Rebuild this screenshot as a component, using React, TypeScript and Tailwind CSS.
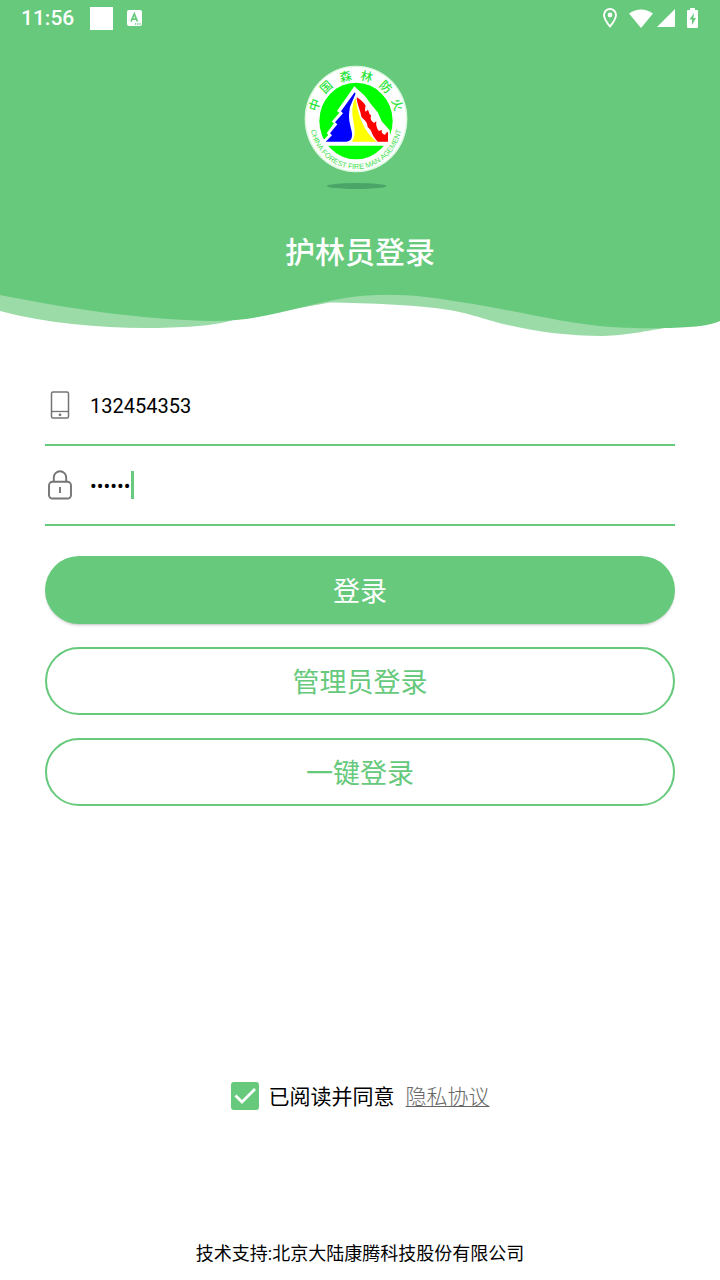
import { useState } from 'react'

const sealText = [
  { char: '中', angle: -71 },
  { char: '国', angle: -43 },
  { char: '森', angle: -14 },
  { char: '林', angle: 14 },
  { char: '防', angle: 43 },
  { char: '火', angle: 71 },
]

const StatusBar = () => (
  <div className="flex h-9 items-center pr-[22px] pl-[21px] text-white">
    <span className="text-[21px] leading-none font-medium">11:56</span>
    <div className="ml-4 size-[23px] bg-white" />
    <svg className="ml-[14px] h-4 w-[15px]" viewBox="0 0 15 16">
      <rect width="15" height="16" rx="2" fill="#fff" />
      <path d="M4 11.500 7.300 4l3.200 7.500M5.200 9.200h4.200" fill="none" stroke="#66c97c" strokeWidth="1.800" />
      <path d="M8 14h1.200M10.300 14h1.200M12.500 14h1.200" stroke="#66c97c" strokeWidth="1.300" />
    </svg>
    <div className="ml-auto flex items-center">
      <svg className="h-5 w-[14px]" viewBox="0 0 14 20">
        <path
          d="M7 1a6 6 0 0 0-6 6c0 4.200 6 11.500 6 11.500S13 11.200 13 7a6 6 0 0 0-6-6Z"
          fill="none"
          stroke="#fff"
          strokeWidth="1.900"
        />
        <circle cx="7" cy="7" r="2.400" fill="#fff" />
      </svg>
      <svg className="ml-3 h-[19px] w-6" viewBox="0 0 24 19">
        <path d="M0 4.500Q12-3.500 24 4.500L12 19Z" fill="#fff" />
      </svg>
      <svg className="ml-1 size-[18px]" viewBox="0 0 18 18">
        <path d="M18 0v18H0Z" fill="#fff" />
      </svg>
      <svg className="ml-3 h-5 w-[11px]" viewBox="0 0 11 20">
        <path d="M3 0h5v2h2a1 1 0 0 1 1 1v16a1 1 0 0 1-1 1H1a1 1 0 0 1-1-1V3a1 1 0 0 1 1-1h2Z" fill="#fff" />
        <path d="M7 5 2.500 11.500H5V17l4-7H6.500Z" fill="#66c97c" />
      </svg>
    </div>
  </div>
)

const Logo = () => (
  <svg className="h-[145px] w-[125px]" viewBox="0 0 375 435" role="img" aria-label="中国森林防火">
    <ellipse cx="183" cy="192" rx="154" ry="160" fill="#fff" />
    <ellipse cx="183" cy="192" rx="152" ry="158" fill="none" stroke="#b9f5c0" strokeWidth="2" />
    <ellipse cx="183" cy="198" rx="110" ry="115" fill="#0f0" />
    <path
      d="M178 94 126 168l7 5-23 27 7 5-22 30 5 4-24 27v6h212l-4-46-24-27-12-27-20-24-18-25Z"
      fill="#fff"
    />
    <path
      d="m178 113-40 56 6 6-24 27 7 6-22 27 6 6-19 19h60c17 0 22-13 18-31-5-25-12-37-5-73l16-38c1-4-1-7-3-5Z"
      fill="#00f"
    />
    <path d="M182 129c-9 14-12 34-9 56 4 28 13 56-3 75h75c-30-22-56-67-63-131Z" fill="#ff0" />
    <path
      d="M185 127c12 7 20 14 27 25-2 8-3 13 0 18l7-6c4 9 3 13 9 17-3 10 0 19 9 23l7-5c-2 12 2 23 8 29l9-4c-3 8 2 14 10 15 1-5 4-8 8-8v29h-31c-23-25-13-30-30-44-2-19-10-20-19-31-2-17-14-38-14-58Z"
      fill="#f00"
    />
    <path d="M78 266h212" stroke="#fff" strokeWidth="7" />
    {sealText.map(({ char, angle }) => (
      <text
        key={char}
        x="183"
        y="74"
        textAnchor="middle"
        transform={`rotate(${angle} 183 192)`}
        className="fill-[#2be53a] font-['Noto_Sans_CJK_SC',sans-serif] text-[36px] font-medium"
      >
        {char}
      </text>
    ))}
    <path id="seal-arc" d="M45 212A139 148 0 0 0 321 212" fill="none" />
    <text className="fill-[#3fdf50] font-['Liberation_Sans',sans-serif] text-[22px]" textAnchor="middle">
      <textPath href="#seal-arc" startOffset="50%">
        CHINA FOREST FIRE MAN AGEMENT
      </textPath>
    </text>
    <ellipse cx="185" cy="393" rx="89" ry="9" fill="#4ba468" />
  </svg>
)

const Wave = () => (
  <svg className="block h-[60px] w-full" viewBox="0 0 720 60" preserveAspectRatio="none">
    <path
      d="M0 0V31C45 43 100 48 145 48C180 48 215 46 233 40L330 22.500C365 23 425 25 455 31C470 34 478 37 492 41C528 51 565 56 602 56C630 55 645 51 665 48L720 40V0Z"
      fill="#9bdba8"
    />
    <path
      d="M0 0V15C60 27 140 40 215 41C265 41 305 24 345 18C385 12 420 15 460 22C520 31 560 43 610 47C640 49 655 48 670 48C700 47 710 45 720 41V0Z"
      fill="#66c97c"
    />
  </svg>
)

const PhoneIcon = () => (
  <svg className="size-[30px] shrink-0" viewBox="0 0 30 30" fill="none" stroke="#757575">
    <rect x="6.500" y="2" width="17" height="26" rx="1.500" strokeWidth="1.500" />
    <path d="M6.500 21.500h17" strokeWidth="1.300" />
    <circle cx="15" cy="24.800" r="1.400" fill="#757575" stroke="none" />
  </svg>
)

const LockIcon = () => (
  <svg className="size-[30px] shrink-0" viewBox="0 0 30 30" fill="none" stroke="#757575" strokeWidth="1.900">
    <rect x="4" y="11.800" width="22" height="16.700" rx="3.500" />
    <path d="M8.800 11.500V7.500a6.200 6.200 0 0 1 12.400 0v4M15 17v6" />
  </svg>
)

const App = () => {
  const [phone, setPhone] = useState('132454353')
  const [password, setPassword] = useState('123456')
  const [agreed, setAgreed] = useState(true)

  return (
    <div className="flex min-h-screen flex-col bg-white font-['Roboto','Noto_Sans_CJK_SC',sans-serif] text-black">
      <header>
        <div className="h-[280px] bg-[#66c97c]">
          <StatusBar />
          <div className="mt-[19px] mr-[5px] flex justify-center">
            <Logo />
          </div>
          <h1 className="mt-[31px] text-center text-[30px] leading-[44px] font-medium text-white">护林员登录</h1>
        </div>
        <Wave />
      </header>
      <form className="mt-[26px] flex flex-col px-[45px]" onSubmit={(e) => e.preventDefault()}>
        <label className="flex h-20 items-center border-b-2 border-[#66c97c]">
          <PhoneIcon />
          <input
            type="tel"
            aria-label="手机号"
            value={phone}
            onChange={(e) => setPhone(e.target.value)}
            className="ml-[15px] h-10 w-full pt-0.5 text-[20px] outline-none"
          />
        </label>
        <label className="flex h-20 items-center border-b-2 border-[#66c97c]">
          <LockIcon />
          <input
            type="password"
            aria-label="密码"
            value={password}
            onChange={(e) => setPassword(e.target.value)}
            className="ml-[15px] field-sizing-content h-10 pt-0.5 text-[20px] caret-transparent outline-none"
          />
          <span className="h-7 w-[3px] bg-[#66c97c]" />
        </label>
        <div className="mt-[30px] flex flex-col gap-[23px] text-[27px]">
          <button
            type="submit"
            className="h-[68px] rounded-full bg-[#66c97c] pt-1 text-white shadow-[0_2px_3px_-1px_rgba(0,0,0,.25)]"
          >
            登录
          </button>
          <button type="button" className="h-[68px] rounded-full border-2 border-[#66c97c] pt-1 text-[#66c97c]">
            管理员登录
          </button>
          <button type="button" className="h-[68px] rounded-full border-2 border-[#66c97c] pt-1 text-[#66c97c]">
            一键登录
          </button>
        </div>
      </form>
      <div className="mt-auto flex items-center justify-center text-[21px] leading-8">
        <label className="flex items-center gap-[10px]">
          <span className="relative size-7">
            <input
              type="checkbox"
              checked={agreed}
              onChange={(e) => setAgreed(e.target.checked)}
              className="peer block size-7 appearance-none rounded-[3px] border-2 border-[#66c97c] checked:bg-[#66c97c]"
            />
            <svg className="pointer-events-none absolute inset-0 hidden peer-checked:block" viewBox="0 0 28 28">
              <path d="m4.500 13.500 6.500 6.500L24 7" fill="none" stroke="#fff" strokeWidth="2.800" />
            </svg>
          </span>
          <span className="pt-0.5">已阅读并同意</span>
        </label>
        <a
          href="#privacy"
          className="ml-[11px] pt-0.5 font-light text-[#666] underline decoration-1 underline-offset-2"
        >
          隐私协议
        </a>
      </div>
      <footer className="mt-[127px] pb-3 text-center text-[18px] leading-7">
        技术支持:北京大陆康腾科技股份有限公司
      </footer>
    </div>
  )
}

export default App
